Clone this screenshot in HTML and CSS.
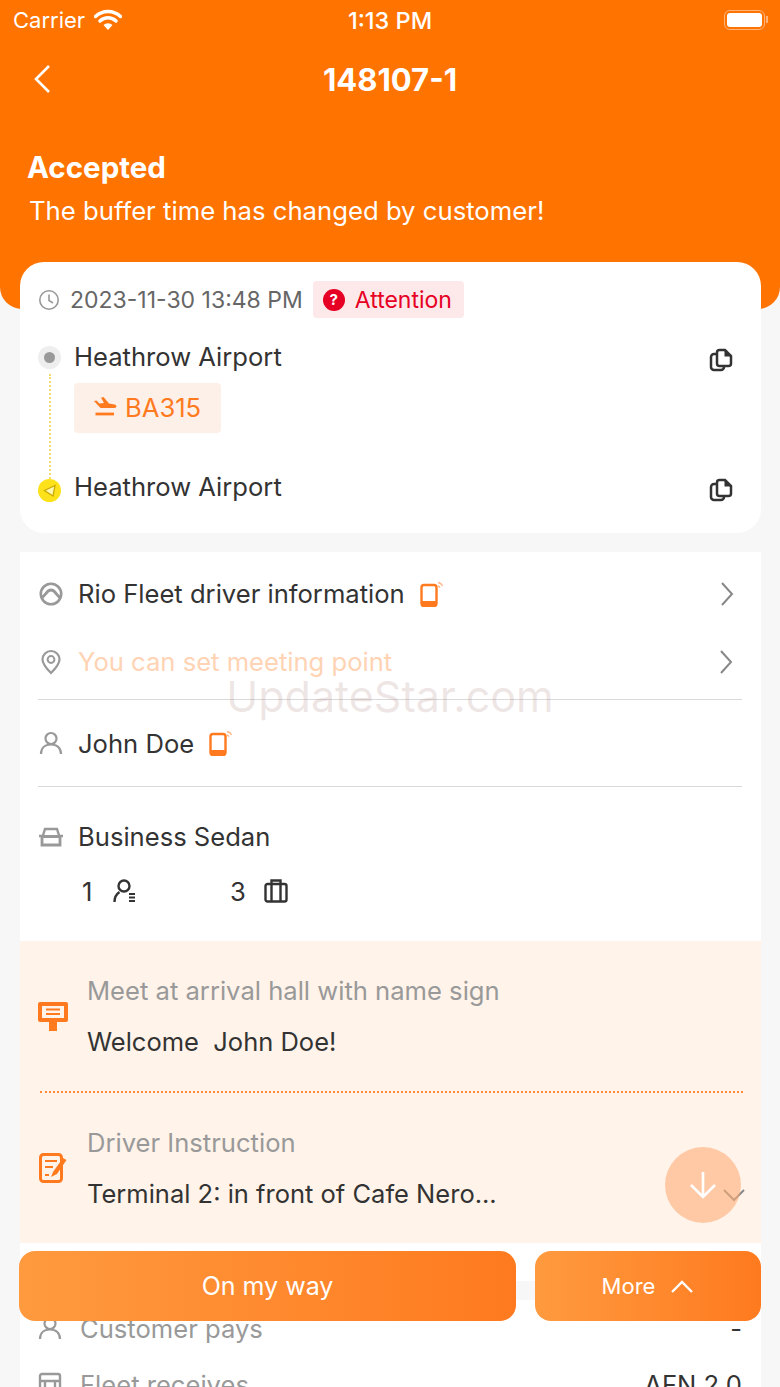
FILE: index.html
```html
<!DOCTYPE html>
<html lang="en">
<head>
    <meta charset="UTF-8">
    <meta name="viewport" content="width=device-width, initial-scale=1.0">
    <title>Order 148107-1</title>
    <link rel="stylesheet" href="styles.css">
</head>
<body>
<div class="screen">

    <div class="header">
        <div class="status-bar">
            <div class="status-left">
                <span>Carrier</span>
                <svg class="wifi" viewBox="0 0 28 22" width="28" height="22"><path d="M1.500 8.500a18 18 0 0 1 25 0M6 13a11.500 11.500 0 0 1 16 0" fill="none" stroke="#fff" stroke-width="3.400" stroke-linecap="round"/><path d="M14 22l-4.500-5a6.500 6.500 0 0 1 9 0z" fill="#fff"/></svg>
            </div>
            <span class="status-time">1:13 PM</span>
            <div class="battery"><div class="battery-fill"></div></div>
        </div>
        <div class="nav">
            <svg class="back" viewBox="0 0 18 30" width="18" height="30"><path d="M16 2L3 15l13 13" fill="none" stroke="#fff" stroke-width="2.600"/></svg>
            <h1>148107-1</h1>
        </div>
        <h2 class="state">Accepted</h2>
        <p class="state-msg">The buffer time has changed by customer!</p>
    </div>

    <div class="content">
        <div class="route-card">
            <div class="time-row">
                <svg viewBox="0 0 22 22" width="22" height="22"><circle cx="11" cy="11" r="9.200" fill="none" stroke="#999" stroke-width="1.600"/><path d="M11 5.500V11.500L15 14" fill="none" stroke="#999" stroke-width="1.600"/></svg>
                <span class="time-text">2023-11-30 13:48 PM</span>
                <span class="attention"><span class="attention-icon">?</span>Attention</span>
            </div>
            <div class="stop stop-from">
                <span class="dot-from"></span>
                <span class="place">Heathrow Airport</span>
                <svg class="copy" viewBox="0 0 24 24" width="24" height="24"><use href="#copy-icon"/></svg>
            </div>
            <div class="flight">
                <svg viewBox="0 0 24 20" width="24" height="20"><path d="M1 4l2.500-.5L6.500 6.500 11 6 8 .8 10.500 0l5.500 6.500 5.500 1c2.500.6 2.500 3.500 0 3.500H7.500z" fill="#ff7a1f"/><path d="M2.500 17H21" stroke="#ff7a1f" stroke-width="2.800"/></svg>
                <span>BA315</span>
            </div>
            <div class="stop stop-to">
                <span class="dot-to"><svg viewBox="0 0 16 16" width="16" height="16"><path d="M13 2.500L2.500 7.500 11 13z" fill="#fff6b0" stroke="#c9a800" stroke-width="1.300"/></svg></span>
                <span class="place">Heathrow Airport</span>
                <svg class="copy" viewBox="0 0 24 24" width="24" height="24"><use href="#copy-icon"/></svg>
            </div>
            <div class="route-line"></div>
        </div>

        <div class="details">
            <div class="row row-driver">
                <svg viewBox="0 0 24 24" width="24" height="24"><circle cx="12" cy="12" r="10.200" fill="none" stroke="#999" stroke-width="2.600"/><path d="M2 15.500c4.500-.5 5-7.500 10-7.500s5.500 7 10 7.500" fill="none" stroke="#999" stroke-width="2.800"/></svg>
                <span class="row-text">Rio Fleet driver information</span>
                <svg class="phone" viewBox="0 0 24 26" width="24" height="26"><use href="#phone-icon"/></svg>
                <svg class="chevron" viewBox="0 0 14 26" width="14" height="26"><path d="M2 2l10 11L2 24" fill="none" stroke="#888" stroke-width="2"/></svg>
            </div>
            <div class="row row-meeting">
                <svg viewBox="0 0 24 26" width="24" height="26"><path d="M12 24C7 19 3.500 15 3.500 10.500a8.500 8.500 0 0 1 17 0C20.500 15 17 19 12 24z" fill="none" stroke="#999" stroke-width="2.200"/><circle cx="12" cy="10.500" r="3.400" fill="none" stroke="#999" stroke-width="2"/></svg>
                <span class="row-text">You can set meeting point</span>
                <svg class="chevron" viewBox="0 0 14 26" width="14" height="26"><path d="M2 2l10 11L2 24" fill="none" stroke="#888" stroke-width="2"/></svg>
            </div>
            <div class="row row-name">
                <svg viewBox="0 0 24 24" width="24" height="24"><circle cx="12" cy="7.500" r="5.500" fill="none" stroke="#999" stroke-width="2.200"/><path d="M2 23c0-6 4-9.500 10-9.500S22 17 22 23" fill="none" stroke="#999" stroke-width="2.200"/></svg>
                <span class="row-text">John Doe</span>
                <svg class="phone" viewBox="0 0 24 26" width="24" height="26"><use href="#phone-icon"/></svg>
            </div>
            <div class="row row-car">
                <svg viewBox="0 0 24 20" width="24" height="20"><path d="M3.500 10L6 2H18L20.500 10" fill="none" stroke="#999" stroke-width="2.400"/><path d="M3 9.500H21V18H3z" fill="none" stroke="#999" stroke-width="2.800"/><path d="M0 9H3M21 9H24" stroke="#999" stroke-width="2.400"/></svg>
                <span class="row-text">Business Sedan</span>
            </div>
            <div class="capacity">
                <span class="capacity-item capacity-people">1
                    <svg viewBox="0 0 24 24" width="24" height="24"><circle cx="11" cy="7" r="5.500" fill="none" stroke="#333" stroke-width="2.400"/><path d="M1.500 23c0-5 2-8 5-10" fill="none" stroke="#333" stroke-width="2.400"/><path d="M16 15h6M16 18.500h6M16 22h6" stroke="#333" stroke-width="2.200"/></svg>
                </span>
                <span class="capacity-item capacity-bags">3
                    <svg viewBox="0 0 24 24" width="24" height="24"><rect x="1.500" y="5" width="21" height="17.500" rx="2" fill="none" stroke="#333" stroke-width="2.400"/><path d="M7.500 5V1.500h9V5M7.500 5v17.500M16.500 5v17.500" fill="none" stroke="#333" stroke-width="2.400"/></svg>
                </span>
            </div>

            <div class="notes">
                <div class="note note-sign">
                    <svg class="note-icon" viewBox="0 0 30 30" width="30" height="30"><path d="M2 1h26a2 2 0 0 1 2 2v16a2 2 0 0 1-2 2H19v9h-8v-9H2a2 2 0 0 1-2-2V3a2 2 0 0 1 2-2z" fill="#ff7a1f"/><rect x="4" y="5" width="22" height="12" fill="#fff3ea"/><path d="M8 8.500h14M8 13h14" stroke="#ff7a1f" stroke-width="2.200"/></svg>
                    <div>
                        <div class="note-label">Meet at arrival hall with name sign</div>
                        <div class="note-value">Welcome&nbsp; John Doe!</div>
                    </div>
                </div>
                <div class="note note-driver">
                    <svg class="note-icon" viewBox="0 0 30 30" width="30" height="30"><rect x="2.500" y="1.500" width="21" height="27" rx="3" fill="none" stroke="#ff7a1f" stroke-width="3"/><path d="M7 8h12M7 14h8M7 22h4" stroke="#ff7a1f" stroke-width="2"/><path d="M13 24l2-5L25 5l3.500 2-9.500 14z" fill="#ff7a1f"/></svg>
                    <div>
                        <div class="note-label">Driver Instruction</div>
                        <div class="note-value">Terminal 2: in front of Cafe Nero...</div>
                    </div>
                    <svg class="note-more" viewBox="0 0 24 14" width="24" height="14"><path d="M2 2l10 10L22 2" fill="none" stroke="#888" stroke-width="2"/></svg>
                </div>
            </div>

            <div class="prices">
                <div class="price-band"></div>
                <div class="price-row">
                    <svg viewBox="0 0 24 24" width="24" height="24"><circle cx="12" cy="7.500" r="5.500" fill="none" stroke="#999" stroke-width="2.200"/><path d="M2 23c0-6 4-9.500 10-9.500S22 17 22 23" fill="none" stroke="#999" stroke-width="2.200"/></svg>
                    <span class="price-label">Customer pays</span>
                    <span class="price-value">-</span>
                </div>
                <div class="price-row">
                    <svg viewBox="0 0 24 24" width="24" height="24"><rect x="2" y="2" width="20" height="20" rx="2" fill="none" stroke="#999" stroke-width="2.400"/><path d="M2 9h20M7 9v13M17 9v13" stroke="#999" stroke-width="2.400"/></svg>
                    <span class="price-label">Fleet receives</span>
                    <span class="price-value">AFN 2.0</span>
                </div>
            </div>
        </div>
    </div>

    <!-- things floating over the scroll area -->
    <div class="watermark">UpdateStar.com</div>
    <div class="scroll-down">
        <svg viewBox="0 0 30 30" width="30" height="30"><path d="M15 2v25M3 15l12 12 12-12" fill="none" stroke="#fff" stroke-width="2.600"/></svg>
    </div>
    <div class="actions">
        <button class="btn btn-main">On my way</button>
        <button class="btn btn-more">More
            <svg viewBox="0 0 24 14" width="24" height="14"><path d="M2 13L12 3l10 10" fill="none" stroke="#fff" stroke-width="2.400"/></svg>
        </button>
    </div>

    <svg class="icon-defs" width="0" height="0">
        <symbol id="copy-icon" viewBox="0 0 24 24">
            <path d="M8 6H5a3 3 0 0 0-3 3v10a3 3 0 0 0 3 3h7a3 3 0 0 0 3-3v-1" fill="none" stroke="#333" stroke-width="2.500"/>
            <path d="M8 4.500A2.500 2.500 0 0 1 10.500 2H16l6 6v7.500a2.500 2.500 0 0 1-2.500 2.500h-9A2.500 2.500 0 0 1 8 15.500z" fill="#fff" stroke="#333" stroke-width="2.500"/>
            <path d="M15.500 2.500V8.500H21.500z" fill="#333"/>
        </symbol>
        <symbol id="phone-icon" viewBox="0 0 24 26">
            <rect x="1.500" y="4" width="15" height="21" rx="2.500" fill="none" stroke="#ff7a1f" stroke-width="2.400"/>
            <path d="M1.500 20h15v3a2 2 0 0 1-2 2h-11a2 2 0 0 1-2-2z" fill="#ff7a1f"/>
            <path d="M18 1.500c2 .3 3.700 1.500 4.500 3.500M18 5c1 .2 1.700.8 2 1.800" fill="none" stroke="#ffb98a" stroke-width="1.300"/>
        </symbol>
    </svg>
</div>
</body>
</html>
```

FILE: styles.css
```css
* {
    box-sizing: border-box;
}

body {
    margin: 0;
    background-color: #f7f7f7;
    font-family: Inter, "Noto Sans", sans-serif;
    color: #333;
}

.screen {
    position: relative;
    width: 780px;
    height: 1387px;
    overflow: hidden;
}

.header {
    height: 309px;
    background-color: #ff7300;
    border-radius: 0 0 22px 22px;
    color: #fff;
}

.status-bar {
    height: 40px;
    padding: 0 13px 0 13px;
    display: flex;
    align-items: center;
    justify-content: space-between;
    font-size: 22px;
    position: relative;
}

.status-left {
    display: flex;
    align-items: center;
    gap: 9px;
}

.wifi {
    margin-top: -3px;
}

.status-time {
    position: absolute;
    left: 0;
    right: 0;
    text-align: center;
    font-size: 23.500px;
    font-weight: 500;
}

.battery {
    position: relative;
    width: 41px;
    height: 20px;
    padding: 2px;
    border: 1.500px solid #ffb27a;
    border-radius: 6px;
    margin-right: 2px;
}

.battery::after {
    content: "";
    position: absolute;
    right: -4px;
    top: 5px;
    width: 2px;
    height: 7px;
    background-color: #ffb27a;
}

.battery-fill {
    height: 100%;
    background-color: #fff;
    border-radius: 3px;
}

.nav {
    height: 78px;
    display: flex;
    align-items: center;
    justify-content: center;
    position: relative;
}

.back {
    position: absolute;
    left: 33px;
    top: 24px;
}

.nav h1 {
    margin: 0;
    font-size: 31px;
    font-weight: 700;
}

.state {
    margin: 29px 0 0 27px;
    font-size: 29.500px;
    line-height: 40px;
    font-weight: 700;
}

.state-msg {
    margin: 8px 0 0 29px;
    font-size: 25.700px;
    line-height: 32px;
}

.content {
    margin-top: -47px;
    padding: 0 19px 0 20px;
}

.route-card {
    position: relative;
    height: 271px;
    padding: 19px 18px 0 18px;
    background-color: #fff;
    border-radius: 24px;
}

.time-row {
    display: flex;
    align-items: center;
    height: 37px;
    font-size: 23px;
}

.time-row svg {
    margin-right: 10px;
}

.time-text {
    color: #666;
    margin-right: 10px;
}

.attention {
    display: flex;
    align-items: center;
    height: 37px;
    padding: 0 12px 0 10px;
    background-color: #fde8ea;
    border-radius: 4px;
    color: #e60023;
}

.attention-icon {
    width: 22px;
    height: 22px;
    margin-right: 10px;
    border-radius: 50%;
    background-color: #e60023;
    color: #fff;
    font-size: 15px;
    font-weight: 700;
    line-height: 22px;
    text-align: center;
}

.stop {
    display: flex;
    align-items: center;
    height: 36px;
}

.stop-from {
    margin-top: 21px;
}

.stop-to {
    margin-top: 36px;
}

.place {
    margin-left: 13px;
    padding-bottom: 2px;
    font-size: 25.600px;
    flex: 1;
}

.copy {
    margin: 6px 10px 0 0;
}

.dot-from,
.dot-to {
    width: 23px;
    height: 23px;
    border-radius: 50%;
    flex: none;
    display: flex;
    align-items: center;
    justify-content: center;
}

.dot-from {
    background-color: #eeeeee;
}

.dot-from::after {
    content: "";
    width: 11px;
    height: 11px;
    border-radius: 50%;
    background-color: #999;
}

.dot-to {
    margin-top: 7px;
    background-color: #fde21b;
}

.flight {
    display: inline-flex;
    align-items: center;
    gap: 8px;
    height: 50px;
    margin: 8px 0 0 36px;
    padding: 0 20px 2px 19px;
    background-color: #fdf0e8;
    border-radius: 4px;
    color: #ff7a1f;
    font-size: 25.600px;
}

.route-line {
    position: absolute;
    left: 29px;
    top: 112px;
    height: 105px;
    border-left: 2px dotted #f5dc6a;
}

.details {
    margin-top: 19px;
    background-color: #fff;
}

.row {
    display: flex;
    align-items: center;
    padding: 0 19px;
}

.row > svg:first-child {
    margin-right: 15px;
    flex: none;
}

.row-text {
    font-size: 25.600px;
}

.phone {
    margin-left: 15px;
}

.chevron {
    margin-left: auto;
    margin-right: 8px;
}

.row-driver {
    height: 83px;
}

.row-meeting {
    height: 65px;
    padding: 0 1px 11px 1px;
    border-bottom: 1px solid #d9d9d9;
    margin: 0 19px 0 18px;
}

.row-meeting .row-text {
    color: #ffd3b3;
}

.row-name {
    height: 87px;
    margin: 0 19px 0 18px;
    padding: 0 1px 0 1px;
    border-bottom: 1px solid #d9d9d9;
}

.row-car {
    height: 100px;
    padding-bottom: 1px;
}

.capacity {
    display: flex;
    height: 54px;
    margin-top: -11px;
    margin-bottom: 11px;
    padding-left: 62px;
    font-size: 25.600px;
}

.capacity-item {
    display: flex;
    align-items: flex-start;
    gap: 21px;
    height: 30px;
}

.capacity-item svg {
    margin-top: 3px;
}

.capacity-people {
    width: 148px;
}

.capacity-bags {
    gap: 18px;
}

.notes {
    height: 302px;
    padding: 0 18px 0 20px;
    background-color: #fff3ea;
}

.note {
    display: flex;
    align-items: center;
    gap: 19px;
    position: relative;
}

.note svg {
    flex: none;
}

.note-icon {
    margin-left: -2px;
}

.note-sign {
    height: 152px;
    border-bottom: 2px dotted #ff8a33;
}

.note-driver {
    height: 150px;
}

.note-label {
    font-size: 25.600px;
    color: #999;
}

.note-value {
    margin-top: 20px;
    font-size: 25.500px;
    color: #333;
}

.note-more {
    position: absolute;
    right: -3px;
    top: 95px;
}

.prices {
    padding: 38px 19px 0 18px;
}

.price-band {
    height: 19px;
    background-color: #f7f7f7;
}

.price-row {
    display: flex;
    align-items: center;
    height: 56px;
    font-size: 25.600px;
}

.price-row svg {
    margin-right: 18px;
}

.price-label {
    color: #999;
    flex: 1;
}

.watermark {
    position: absolute;
    left: 0;
    right: 0;
    top: 670px;
    text-align: center;
    font-size: 43px;
    color: rgba(180, 140, 140, 0.22);
    pointer-events: none;
}

.scroll-down {
    position: absolute;
    left: 665px;
    top: 1147px;
    width: 76px;
    height: 76px;
    border-radius: 50%;
    background-color: rgba(255, 173, 120, 0.6);
    display: flex;
    align-items: center;
    justify-content: center;
}

.actions {
    position: absolute;
    left: 19px;
    right: 19px;
    top: 1251px;
    display: flex;
    gap: 19px;
}

.btn {
    height: 70px;
    border: none;
    border-radius: 16px;
    background: linear-gradient(90deg, #ff9a3f, #ff7a1f);
    color: #fff;
    font-family: inherit;
    font-size: 25px;
}

.btn-main {
    flex: 1;
}

.btn-more {
    width: 226px;
    display: flex;
    align-items: center;
    justify-content: center;
    gap: 15px;
    font-size: 22px;
}

.icon-defs {
    position: absolute;
}
```
